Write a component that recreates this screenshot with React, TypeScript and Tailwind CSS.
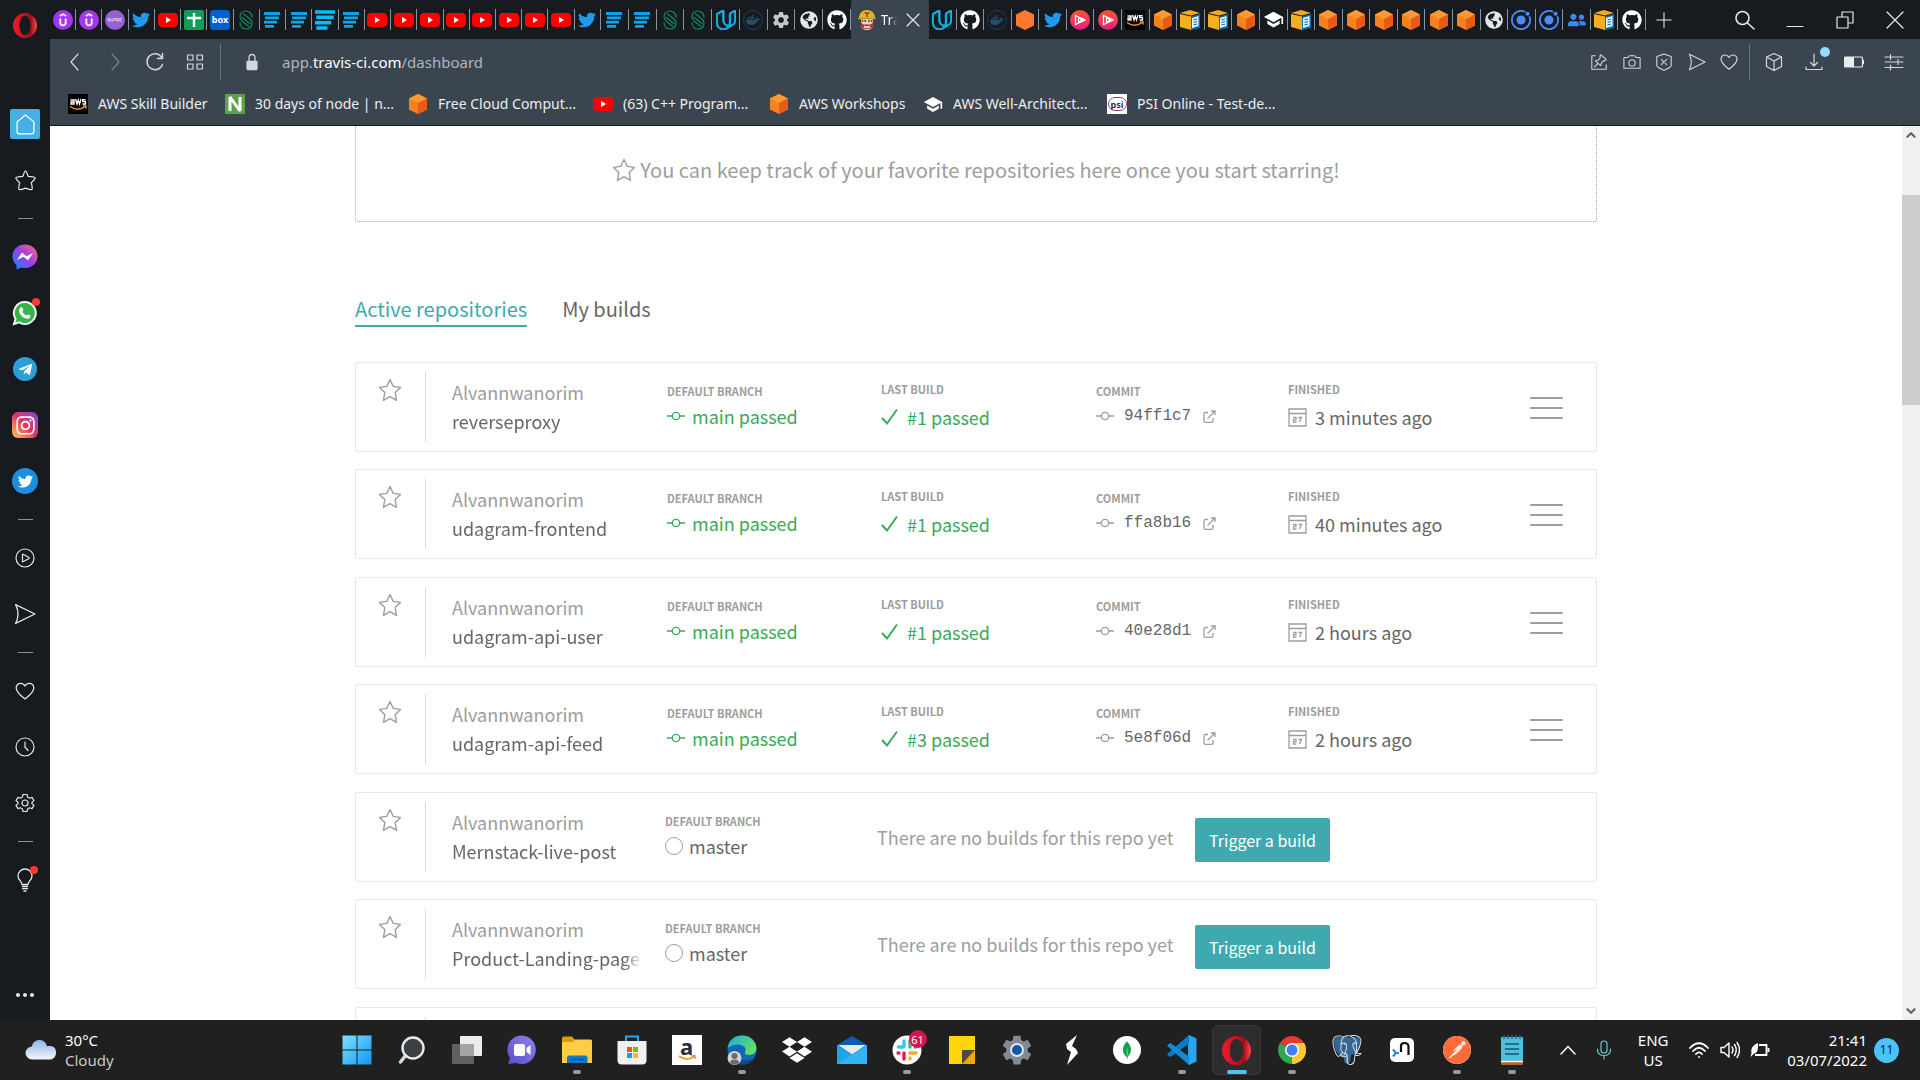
import React, { type ReactNode } from "react";
import {
  FaAws,
  FaDocker,
  FaDropbox,
  FaGithub,
  FaGlobeAmericas,
  FaInstagram,
  FaTelegramPlane,
  FaTwitter,
  FaUserFriends,
} from "react-icons/fa";
import { IoSettingsSharp } from "react-icons/io5";
import { MdSchool } from "react-icons/md";
import { SiIonic, SiMongodb, SiPluralsight, SiPostgresql, SiPostman, SiUdacity } from "react-icons/si";

/* ---------- shared glyphs ---------- */

function Line({ d, size = 20, w = 1.2, className = "" }: { d: string; size?: number; w?: number; className?: string }) {
  return (
    <svg width={size} height={size} viewBox="0 0 20 20" fill="none" stroke="currentColor" strokeWidth={w} className={className} aria-hidden>
      <path d={d} strokeLinejoin="round" strokeLinecap="round" />
    </svg>
  );
}

const HEART = "M10 17.2C5 13.4 2 10.6 2 7.2C2 4.700 3.900 3 6 3C7.700 3 9.200 4 10 5.500C10.800 4 12.300 3 14 3C16.100 3 18 4.700 18 7.200C18 10.600 15 13.400 10 17.200Z";
const SEND = "M1.500 1.500L19 10L1.500 18.500C4.500 12.500 4.500 7.500 1.500 1.500Z";

function Star({ size = 24 }: { size?: number }) {
  return (
    <svg width={size} height={size} viewBox="0 0 24 24" fill="none" stroke="currentColor" strokeWidth="1.400" aria-hidden>
      <path d="M12 1.500L15.200 8.400L22.500 9.400L17.200 14.600L18.500 22.300L12 18.700L5.500 22.300L6.800 14.600L1.500 9.400L8.800 8.400Z" strokeLinejoin="round" />
    </svg>
  );
}

function OperaO({ id, width, height }: { id: string; width: number; height: number }) {
  return (
    <svg width={width} height={height} viewBox="0 0 24 30" preserveAspectRatio="none" aria-hidden>
      <defs>
        <linearGradient id={id} x1="0" x2="1" y1="0" y2="0">
          <stop offset="0" stopColor="#f01a2b" />
          <stop offset="0.5" stopColor="#c8101e" />
          <stop offset="0.75" stopColor="#a20d18" />
          <stop offset="1" stopColor="#ff4b4b" />
        </linearGradient>
      </defs>
      <path fillRule="evenodd" fill={`url(#${id})`} d="M12 0C18.600 0 24 6.700 24 15S18.600 30 12 30S0 23.300 0 15S5.400 0 12 0ZM12 3.200C8.600 3.200 6.500 8.500 6.500 15S8.600 26.800 12 26.800S17.500 21.500 17.500 15S15.400 3.200 12 3.200Z" />
    </svg>
  );
}

/* ---------- favicons ---------- */

function Youtube() {
  return (
    <svg width="20" height="20" viewBox="0 0 20 20" aria-hidden>
      <rect y="3" width="20" height="14" rx="4" fill="#f00" />
      <path d="M8 7L13 10L8 13Z" fill="#fff" />
    </svg>
  );
}

function Udemy() {
  return (
    <svg width="20" height="20" viewBox="0 0 20 20" aria-hidden>
      <circle cx="10" cy="10" r="10" fill="#a435f0" />
      <path d="M6.800 6L10 4.200L13.200 6M7.300 8.500V12.500C7.300 16.200 12.700 16.200 12.700 12.500V8.500" fill="none" stroke="#fff" strokeWidth="1.800" />
    </svg>
  );
}

function PurpleBadge() {
  return (
    <svg width="20" height="20" viewBox="0 0 20 20" aria-hidden>
      <circle cx="10" cy="10" r="10" fill="#9261d3" />
      <path d="M3 8.500H5V11H3ZM6 8.500V11H8V8.500M9 11V8.500H11V11M12 8.500H14V11H12ZM17 8.500H15V11H17" fill="none" stroke="#e6d8f5" strokeWidth="0.800" />
    </svg>
  );
}

function Sheets() {
  return (
    <svg width="20" height="20" viewBox="0 0 20 20" aria-hidden>
      <rect width="20" height="20" rx="2" fill="#0f9d58" />
      <path d="M10 3V17M3 8H17" stroke="#fff" strokeWidth="2.400" />
    </svg>
  );
}

function Box() {
  return (
    <span className="flex size-5 items-center justify-center rounded-sm bg-[#0061d5] text-[9px] font-bold leading-none text-white">box</span>
  );
}

function GreenS() {
  return (
    <svg width="16" height="20" viewBox="0 0 16 20" fill="none" stroke="#0d8f63" strokeWidth="1.200" aria-hidden>
      <path d="M14 7.500C14 3.500 11.500 1 8 1S2 3 2 7C2 9 3 10 4 11L11 16.500" />
      <path d="M2 12.500C2 16.500 4.500 19 8 19S14 17 14 13C14 11 13 10 12 9L5 3.500" />
      <path d="M3.500 7L12.500 14" />
    </svg>
  );
}

function Lines({ big = false }: { big?: boolean }) {
  return (
    <svg width={big ? 20 : 16} height={big ? 20 : 16} viewBox="0 0 16 16" preserveAspectRatio="none" stroke={big ? "#00bfff" : "#0ba5e9"} strokeWidth="2.800" aria-hidden>
      <path d="M0 1.500H16M1 5.800H15M0 10.100H13M1 14.400H10" />
    </svg>
  );
}

function Cube({ flat = false }: { flat?: boolean }) {
  return (
    <svg width="20" height="20" viewBox="0 0 20 20" aria-hidden>
      <path d="M10 0L19 4.500V15.500L10 20L1 15.500V4.500Z" fill={flat ? "#ff7a2e" : "#f58220"} />
      {!flat && (
        <>
          <path d="M10 0L19 4.500L10 9L1 4.500Z" fill="#ff9a33" />
          <path d="M10 9L19 4.500V15.500L10 20Z" fill="#e65c17" />
        </>
      )}
    </svg>
  );
}

function YellowBox() {
  return (
    <svg width="20" height="20" viewBox="0 0 20 20" aria-hidden>
      <path d="M0 4L11 6.500V20L0 17Z" fill="#f2b01e" />
      <path d="M0 3L10 0L20 3L11 5.500Z" fill="#f5a623" />
      <path d="M11 6.500L20 4V18L11 20Z" fill="#0a6fb0" />
      <path d="M12 8L18.500 6V16L12 18Z" fill="#e9f5fb" />
      <path d="M13.500 10L17 9M13.500 12.500L17 11.500M13.500 15L17 14" stroke="#0a6fb0" strokeWidth="1.200" />
    </svg>
  );
}

function Whale() {
  return (
    <span className="flex size-5 items-center justify-center rounded-full border border-[#1f3f55] text-[#23506d]">
      <FaDocker size={14} />
    </span>
  );
}

function Plural() {
  return (
    <span className="flex size-5 items-center justify-center rounded-full bg-linear-to-b from-[#f7542e] to-[#e8127c] text-white">
      <svg width="12" height="12" viewBox="0 0 12 12" fill="none" stroke="currentColor" strokeWidth="1.200" aria-hidden>
        <path d="M1.500 1.500L11 6L1.500 10.500ZM4.500 3.500V8.500L8 6Z" />
      </svg>
    </span>
  );
}

function AwsTile() {
  return (
    <span className="flex size-5 items-center justify-center bg-black">
      <svg width="18" height="14" viewBox="0 0 18 14" fill="none" aria-hidden>
        <path d="M1.500 3H5V7H2V5H5M6.500 2L8 7L9.200 3L10.500 7L12 2M16.500 2.700H13.700V4.500H16.500V7H13.500" stroke="#fff" strokeWidth="1.300" />
        <path d="M1 9.500Q8 14.500 15.500 10.200M14 9H17V11.500" stroke="#f7981d" strokeWidth="1.500" />
      </svg>
    </span>
  );
}

function Travis() {
  return (
    <svg width="18" height="20" viewBox="0 0 18 20" className="shrink-0" aria-hidden>
      <path d="M3 8H15V15C15 18 12 20 9 20S3 18 3 15Z" fill="#e8d2b4" />
      <path d="M1 8C1 3 4.500 0 9 0S17 3 17 8Z" fill="#d9b92c" />
      <path d="M0 8.500H18" stroke="#b7971f" strokeWidth="1.500" />
      <path d="M6.500 3H11.500M9 3V7" stroke="#b5322f" strokeWidth="1.500" />
      <path d="M3 12.500C5 15 8 15 9 14C10 15 13 15 15 12.500V16C14 20 4 20 3 16Z" fill="#c62f35" />
      <path d="M6 17H12" stroke="#fff" strokeWidth="1.500" />
      <path d="M3.500 11H8M10 11H14.500" stroke="#6b5a4c" strokeWidth="2" />
      <path d="M5 11H6.500M11.500 11H13" stroke="#fff" strokeWidth="1" />
    </svg>
  );
}

const tw = () => <FaTwitter size={18} className="text-[#1d9bf0]" />;
const gh = () => <FaGithub size={20} className="text-white" />;
const yt = () => <Youtube />;
const cube = () => <Cube />;
const cap = () => <MdSchool size={21} className="text-white" />;
const globe = () => <FaGlobeAmericas size={18} className="text-[#e3e6e8]" />;
const ionic = () => <SiIonic size={20} className="text-[#4a8bfd]" />;
const udacity = () => <SiUdacity size={20} className="text-[#12b5ea]" stroke="currentColor" strokeWidth={1.2} />;

const tabsLeft = [
  () => <Udemy />, () => <Udemy />, () => <PurpleBadge />, tw, yt, () => <Sheets />, () => <Box />, () => <GreenS />,
  () => <Lines />, () => <Lines />, () => <Lines big />, () => <Lines />, yt, yt, yt, yt, yt, yt, yt, yt, tw,
];
const tabsMiddle = [
  () => <Lines />, () => <Lines />, () => <GreenS />, () => <GreenS />, udacity, () => <Whale />,
  () => <IoSettingsSharp size={18} className="text-[#c3c7ca]" />, globe, gh,
];
const tabsRight = [
  udacity, gh, () => <Whale />, () => <Cube flat />, tw, () => <Plural />, () => <Plural />, () => <AwsTile />, cube,
  () => <YellowBox />, () => <YellowBox />, cube, cap, () => <YellowBox />,
  cube, cube, cube, cube, cube, cube, globe, ionic, ionic,
  () => <FaUserFriends size={18} className="text-[#3f86f5]" />, () => <YellowBox />, gh,
];

function TabGroup({ tabs, label, className }: { tabs: (() => ReactNode)[]; label: string; className: string }) {
  return (
    <div className={`flex min-w-0 items-center ${className}`}>
      {tabs.map((icon, i) => (
        <button key={i} aria-label={`${label} ${i + 1}`} className="flex h-[21px] min-w-0 flex-1 items-center justify-center border-r border-[#8795a1]">
          {icon()}
        </button>
      ))}
    </div>
  );
}

function TabStrip() {
  return (
    <div className="flex h-[39px] bg-[#171b1f] text-[#e6e9eb]">
      <div className="flex min-w-0 flex-1">
        <TabGroup tabs={tabsLeft} label="Pinned tab" className="flex-[551]" />
        <TabGroup tabs={tabsMiddle} label="Background tab" className="flex-[250]" />
        <div className="flex min-w-0 flex-[78] items-center justify-center gap-[5px] rounded-t-xs bg-[#3b4550]">
          <Travis />
          <span className="w-[17px] overflow-hidden bg-linear-to-r from-white from-50% to-[#3b4550] bg-clip-text text-[14px] text-transparent">Tra</span>
          <button aria-label="Close tab">
            <Line d="M4 4L16 16M16 4L4 16" />
          </button>
        </div>
        <TabGroup tabs={tabsRight} label="Open tab" className="flex-[717]" />
      </div>
      <button aria-label="New tab" className="flex w-[35px] items-center justify-center">
        <Line d="M2 10H18M10 2V18" size={18} />
      </button>
      <div className="flex w-[239px] items-center justify-end">
        <button aria-label="Search tabs" className="flex w-[50px] justify-center">
          <Line d="M14 8A6.500 6.500 0 1 1 1 8A6.500 6.500 0 1 1 14 8M12.500 13L19 19" w={1.6} />
        </button>
        <button aria-label="Minimise" className="flex w-[50px] justify-center">
          <Line d="M2 16.500H18" />
        </button>
        <button aria-label="Restore" className="flex w-[50px] justify-center">
          <Line d="M2 7H13V18H2ZM7 7V2H18V13H13" />
        </button>
        <button aria-label="Close window" className="flex w-[50px] justify-center">
          <Line d="M2 2L18 18M18 2L2 18" />
        </button>
      </div>
    </div>
  );
}

/* ---------- address bar and bookmarks ---------- */

function IconButton({ label, className, children }: { label: string; className: string; children: ReactNode }) {
  return (
    <button aria-label={label} className={`flex shrink-0 items-center justify-center ${className}`}>
      {children}
    </button>
  );
}

function AddressBar() {
  return (
    <div className="flex h-[46px] items-center pl-[5px] text-[#d3d7db]">
      <IconButton label="Back" className="w-10"><Line d="M13 2L6 10L13 18" /></IconButton>
      <IconButton label="Forward" className="w-10 text-[#76818c]"><Line d="M7 2L14 10L7 18" /></IconButton>
      <IconButton label="Reload" className="w-10"><Line d="M16.500 5A8 8 0 1 0 17.500 12.500M17.500 1.500V6.500H12.500" w={1.5} /></IconButton>
      <IconButton label="Tab tiles" className="w-10"><Line d="M2.500 3H8V8H2.500ZM12 3H17.500V8H12ZM2.500 12H8V17H2.500ZM12 12H17.500V17H12Z" /></IconButton>
      <div className="ml-[5px] h-9 w-px bg-[#69737d]" />
      <div className="flex w-[61px] justify-center">
        <svg width="12" height="18" viewBox="0 0 14 20" aria-hidden>
          <path d="M3.500 9V5C3.500 0 10.500 0 10.500 5V9" fill="none" stroke="#d3d7db" strokeWidth="1.500" />
          <rect x="0.500" y="8.500" width="13" height="11" rx="1.500" fill="#d3d7db" />
        </svg>
      </div>
      <p className="flex-1 text-[15px] text-[#aeb6be]">
        app.<span className="text-white">travis-ci.com</span>/dashboard
      </p>
      <IconButton label="Pin to board" className="w-[33px]"><Line size={18} d="M6 3H2V18H18V13M12 2L18 7L16 9L15 8.500L12.500 11.500L12 14L6 9L9 8L11.500 5L11 3.500ZM9 11.500L5 15.500" /></IconButton>
      <IconButton label="Snapshot" className="w-[33px]"><Line size={18} d="M1 5H5.500L7 3H13L14.500 5H19V17H1ZM13.500 11A3.500 3.500 0 1 1 6.500 11A3.500 3.500 0 1 1 13.500 11" /></IconButton>
      <IconButton label="Tracker blocker" className="w-[32px]"><Line size={18} d="M10 1L18 4V13.500C18 16 13 17.500 10 19.500C7 17.500 2 16 2 13.500V4ZM7 7L13 13M13 7L7 13" /></IconButton>
      <IconButton label="Send" className="w-[33px]"><Line size={18} d={SEND} /></IconButton>
      <IconButton label="Add to bookmarks" className="w-[32px]"><Line d={HEART} /></IconButton>
      <div className="mx-1 h-9 w-px bg-[#69737d]" />
      <IconButton label="Extensions" className="w-10"><Line d="M10 1.500L17.500 5V14.500L10 18.500L2.500 14.500V5ZM2.500 5L10 9L17.500 5M10 9V18.500" /></IconButton>
      <div className="relative">
        <IconButton label="Downloads" className="w-10"><Line d="M10 2V14M6.500 10.500L10 14L13.500 10.500M2 15V17.500H18V15" /></IconButton>
        <span className="absolute -top-[5px] right-[4px] size-[10px] rounded-full bg-[#93dcff]" />
      </div>
      <IconButton label="Battery saver" className="w-10">
        <svg width="20" height="12" viewBox="0 0 20 12" aria-hidden>
          <rect x="0.500" y="1" width="18" height="10" rx="1" fill="none" stroke="#e8ebed" strokeWidth="1.200" />
          <rect x="0.500" y="1" width="9.500" height="10" fill="#e8ebed" />
          <path d="M19.500 4V8" stroke="#e8ebed" />
        </svg>
      </IconButton>
      <IconButton label="Easy setup" className="mr-[6px] w-10"><Line d="M1 5H19M1 10H19M1 15.500H19M6.500 2.500V7.500M14 7.500V12.500M6.500 13V18" /></IconButton>
    </div>
  );
}

const bookmarks: { label: string; width: string; icon: ReactNode }[] = [
  { label: "AWS Skill Builder", width: "w-[157px]", icon: <AwsTile /> },
  {
    label: "30 days of node | n...",
    width: "w-[183px]",
    icon: (
      <svg width="20" height="20" viewBox="0 0 20 20" aria-hidden>
        <rect width="20" height="20" fill="#5fa04e" />
        <path d="M5 17V3L15 17V3" fill="none" stroke="#fff" strokeWidth="3" strokeLinejoin="bevel" />
      </svg>
    ),
  },
  { label: "Free Cloud Comput...", width: "w-[185px]", icon: <Cube /> },
  { label: "(63) C++ Program...", width: "w-[176px]", icon: <Youtube /> },
  { label: "AWS Workshops", width: "w-[154px]", icon: <Cube /> },
  { label: "AWS Well-Architect...", width: "w-[184px]", icon: cap() },
  {
    label: "PSI Online - Test-de...",
    width: "w-[184px]",
    icon: (
      <span className="flex size-5 items-center justify-center bg-white">
        <span className="flex h-[14px] w-[19px] items-center justify-center rounded-full border border-[#9b4a6b] text-[9px] font-bold leading-none text-[#1c3766]">psi</span>
      </span>
    ),
  },
];

function Bookmarks() {
  return (
    <nav className="flex h-10 items-center pb-[2px] pl-[18px] text-[14px] leading-5 text-[#eceef0]">
      {bookmarks.map((b) => (
        <a key={b.label} href="#" className={`flex shrink-0 items-center gap-[10px] whitespace-nowrap ${b.width}`}>
          <span className="flex w-5 shrink-0 justify-center">{b.icon}</span>
          {b.label}
        </a>
      ))}
    </nav>
  );
}

/* ---------- browser sidebar ---------- */

function SideItem({ label, dot = false, children }: { label: string; dot?: boolean; children: ReactNode }) {
  return (
    <button aria-label={label} className="flex h-14 w-full items-center justify-center">
      <span className="relative flex">
        {children}
        {dot && <span className="absolute -right-[2px] -top-[2px] size-2 rounded-full bg-[#ff3a2f]" />}
      </span>
    </button>
  );
}

function Dash() {
  return (
    <div className="flex h-[21px] items-center justify-center">
      <span className="h-px w-[15px] bg-[#8493a0]" />
    </div>
  );
}

function Sidebar() {
  return (
    <aside className="flex w-[50px] shrink-0 flex-col bg-[#171b1f] text-[#e1e5e8]">
      <button aria-label="Opera menu" className="mb-[46px] flex h-[50px] items-center justify-center">
        <OperaO id="opera-menu" width={24} height={25} />
      </button>
      <SideItem label="Start page">
        <span className="flex size-[30px] items-center justify-center rounded-xs bg-[#46b0e6] text-white">
          <Line d="M10 1L18 7.500V17Q18 19 16 19H4Q2 19 2 17V7.500Z" size={21} />
        </span>
      </SideItem>
      <SideItem label="Speed dials">
        <Line d="M10 1Q11 1 12.500 6Q19 6.300 19.200 7.500Q19.200 8.500 15.500 12Q17 17.800 16 18.600Q15 19.200 10 17.200Q5 19.200 4 18.600Q3 17.800 4.500 12Q0.800 8.500 0.800 7.500Q1 6.300 7.500 6Q9 1 10 1Z" size={21} />
      </SideItem>
      <Dash />
      <SideItem label="Messenger">
        <svg width="26" height="26" viewBox="0 0 26 26" aria-hidden>
          <defs>
            <linearGradient id="msgr" x1="0" y1="1" x2="1" y2="0">
              <stop offset="0" stopColor="#0a8cff" />
              <stop offset="0.5" stopColor="#9a3df2" />
              <stop offset="1" stopColor="#ff6a63" />
            </linearGradient>
          </defs>
          <path d="M13 0.500C20 0.500 25.500 5.500 25.500 12.200S20 24 13 24Q11 24 9.200 23.400L4.500 25.500V21Q0.500 17.500 0.500 12.200C0.500 5.500 6 0.500 13 0.500Z" fill="url(#msgr)" />
          <path d="M5 16L10 8.500L14.500 12.300L21 9L16 16.500L11.500 12.800Z" fill="#fff" />
        </svg>
      </SideItem>
      <SideItem label="WhatsApp" dot>
        <svg width="26" height="26" viewBox="0 0 26 26" aria-hidden>
          <path d="M13 1A12 12 0 1 1 7 23.500L0.500 25.500L2.500 19A12 12 0 0 1 13 1Z" fill="#f2f4f2" />
          <path d="M13 3A10 10 0 1 1 7.200 21.300L3.400 22.500L4.600 18.700A10 10 0 0 1 13 3Z" fill="#35b44a" />
          <path d="M8.500 7.500Q10 6.500 10.800 8.500L11.400 10.200L10.400 11.800Q11.800 14.400 14.300 15.600L15.900 14.400L18.400 15.600Q18.800 18.500 15.500 18.800Q9 18 7 11.500Q7 8.500 8.500 7.500Z" fill="#fff" />
        </svg>
      </SideItem>
      <SideItem label="Telegram">
        <span className="flex size-6 items-center justify-center rounded-full bg-[#2d9fd8] text-white">
          <FaTelegramPlane size={15} />
        </span>
      </SideItem>
      <SideItem label="Instagram">
        <span className="flex size-[26px] items-center justify-center rounded-md bg-linear-to-tr from-[#fbc24a] via-[#e0325f] to-[#7a3ad0] text-white">
          <FaInstagram size={21} />
        </span>
      </SideItem>
      <SideItem label="Twitter">
        <span className="flex size-[26px] items-center justify-center rounded-full bg-[#1d8fe0] text-white">
          <FaTwitter size={15} />
        </span>
      </SideItem>
      <Dash />
      <SideItem label="Player">
        <Line d="M19 10A9 9 0 1 1 1 10A9 9 0 1 1 19 10M7.500 6.500Q7.500 6 8 6.200L14 9.500Q14.500 10 14 10.500L8 13.800Q7.500 14 7.500 13.500Z" />
      </SideItem>
      <SideItem label="My Flow"><Line d={SEND} size={22} /></SideItem>
      <Dash />
      <SideItem label="Bookmarks"><Line d={HEART} size={22} /></SideItem>
      <SideItem label="History"><Line d="M19 10A9 9 0 1 1 1 10A9 9 0 1 1 19 10M10 5V10L13 13.500" /></SideItem>
      <SideItem label="Settings">
        <Line d="M8 1.500H12L12.600 4L14.600 5.200L17 4.400L19 7.600L17 9.200V10.800L19 12.400L17 15.600L14.600 14.800L12.600 16L12 18.500H8L7.400 16L5.400 14.800L3 15.600L1 12.400L3 10.800V9.200L1 7.600L3 4.400L5.400 5.200L7.400 4ZM13 10A3 3 0 1 1 7 10A3 3 0 1 1 13 10" />
      </SideItem>
      <Dash />
      <SideItem label="Tips" dot>
        <svg width="22" height="24" viewBox="0 0 22 24" fill="none" stroke="currentColor" strokeWidth="1.300" aria-hidden>
          <path d="M8 16.500C8 13.500 4 12 4 8A7 7 0 0 1 18 8C18 12 14 13.500 14 16.500ZM8 18.500H14M8 20.700H14M9.500 23H12.500" />
        </svg>
      </SideItem>
      <button aria-label="Sidebar setup" className="mb-[13px] mt-auto flex h-6 items-center justify-center gap-[3px]">
        <span className="size-1 rounded-full bg-[#e1e5e8]" />
        <span className="size-1 rounded-full bg-[#e1e5e8]" />
        <span className="size-1 rounded-full bg-[#e1e5e8]" />
      </button>
    </aside>
  );
}

/* ---------- dashboard ---------- */

type Repo = { name: string; build?: string; commit?: string; finished?: string };

const repos: Repo[] = [
  { name: "reverseproxy", build: "#1 passed", commit: "94ff1c7", finished: "3 minutes ago" },
  { name: "udagram-frontend", build: "#1 passed", commit: "ffa8b16", finished: "40 minutes ago" },
  { name: "udagram-api-user", build: "#1 passed", commit: "40e28d1", finished: "2 hours ago" },
  { name: "udagram-api-feed", build: "#3 passed", commit: "5e8f06d", finished: "2 hours ago" },
  { name: "Mernstack-live-post" },
  { name: "Product-Landing-page" },
];

function CommitIcon() {
  return (
    <svg width="18" height="12" viewBox="0 0 18 12" fill="none" stroke="currentColor" strokeWidth="1.300" className="shrink-0" aria-hidden>
      <circle cx="9" cy="6" r="3.700" />
      <path d="M0 6H5.300M12.700 6H18" />
    </svg>
  );
}

function Field({ label, high = false, children }: { label: string; high?: boolean; children: ReactNode }) {
  return (
    <div className={`flex min-w-0 flex-col whitespace-nowrap ${high ? "gap-[3px] pt-[16px]" : "pt-[18px]"}`}>
      <h3 className="text-[11px] font-semibold leading-5 text-[#9d9d9d]">{label}</h3>
      <div className="flex h-[30px] items-center text-[18px]">{children}</div>
    </div>
  );
}

function Owner({ name }: { name: string }) {
  return (
    <>
      <div className="flex justify-center pr-[2px] pt-[15px] text-[#9d9d9d]">
        <button aria-label={`Star ${name}`} className="flex h-6"><Star /></button>
      </div>
      <div className="my-[9px] min-w-0 border-l border-[#d9d9d9] pl-[26px] pt-[6px] text-[18px] leading-[29px]">
        <p className="text-[#9d9d9d]">Alvannwanorim</p>
        <a href="#" className="block w-[191px] whitespace-nowrap text-[#666] mask-r-from-90%">{name}</a>
      </div>
    </>
  );
}

const frame = "mb-[17px] grid h-[90px] rounded-xs border border-[#e8e8e8] even:mb-[18px]";

function RepoCard({ repo }: { repo: Repo }) {
  if (!repo.build) {
    return (
      <li className={`${frame} grid-cols-[69px_240fr_212fr_318fr_401fr]`}>
        <Owner name={repo.name} />
        <Field label="DEFAULT BRANCH">
          <span className="mr-[6px] size-[18px] rounded-full border border-[#9d9d9d]" />
          <span className="text-[#666]">master</span>
        </Field>
        <p className="min-w-0 self-center whitespace-nowrap text-[18px] leading-[30px] text-[#9d9d9d]">There are no builds for this repo yet</p>
        <div className="min-w-0 pt-[25px]">
          <button className="h-11 w-[135px] rounded-xs bg-[#3eaaaf] text-[16px] text-white">Trigger a build</button>
        </div>
      </li>
    );
  }
  return (
    <li className={`${frame} grid-cols-[69px_242fr_214fr_215fr_192fr_242fr_66px]`}>
      <Owner name={repo.name} />
      <Field label="DEFAULT BRANCH">
        <span className="flex items-center gap-[7px] text-[#39aa56]">
          <CommitIcon />
          main passed
        </span>
      </Field>
      <Field label="LAST BUILD" high>
        <span className="flex items-center gap-[9px] text-[#39aa56]">
          <svg width="17" height="18" viewBox="0 0 17 18" fill="none" stroke="currentColor" strokeWidth="2" aria-hidden>
            <path d="M1 10L6 15.500L16 1.500" />
          </svg>
          {repo.build}
        </span>
      </Field>
      <Field label="COMMIT">
        <span className="flex items-center text-[#9d9d9d]">
          <CommitIcon />
          <a href="#" className="ml-[10px] font-['Liberation_Mono',monospace] text-[16px] text-[#666]">{repo.commit}</a>
          <svg width="13" height="13" viewBox="0 0 13 13" fill="none" stroke="currentColor" strokeWidth="1.300" className="ml-[12px]" aria-hidden>
            <path d="M5 2.500H2.500Q1 2.500 1 4V11Q1 12.300 2.500 12.300H8.500Q10 12.300 10 11V8M4.500 8.500L12 1M8 1H12V5" />
          </svg>
        </span>
      </Field>
      <Field label="FINISHED" high>
        <svg width="19" height="19" viewBox="0 0 19 19" fill="none" stroke="#9d9d9d" strokeWidth="1.300" className="mr-[8px]" aria-hidden>
          <path d="M1 1H18V18H1ZM1 5.500H18" />
          <path d="M5 9.500H8V11.700H5.500V14H8.500M10.500 9.500H13.500L11.500 14" />
        </svg>
        <span className="text-[#666]">{repo.finished}</span>
      </Field>
      <div className="pt-[34px]">
        <button aria-label={`Menu for ${repo.name}`} className="flex h-[22px] w-[33px] flex-col justify-between">
          <span className="h-[2px] w-full rounded-full bg-[#9d9d9d]" />
          <span className="h-[2px] w-full rounded-full bg-[#9d9d9d]" />
          <span className="h-[2px] w-full rounded-full bg-[#9d9d9d]" />
        </button>
      </div>
    </li>
  );
}

function Dashboard() {
  return (
    <main className="min-w-0 flex-1 overflow-hidden bg-white font-['Noto_Sans_CJK_SC',sans-serif]">
      <div className="mx-auto max-w-[1242px]">
        <section className="flex h-24 items-center justify-center gap-[4px] rounded-b-xs border border-t-0 border-dotted border-[#a9a9a9] pb-[8px] text-[20px] text-[#9d9d9d]">
          <Star />
          You can keep track of your favorite repositories here once you start starring!
        </section>
        <nav className="mb-[35px] mt-[70px] flex gap-[35px] text-[20px] leading-[33px]">
          <a href="#" aria-current="page" className="border-b-2 border-[#3eaaaf] text-[#3eaaaf]">Active repositories</a>
          <a href="#" className="text-[#666]">My builds</a>
        </nav>
        <ul>
          {repos.map((r) => <RepoCard key={r.name} repo={r} />)}
          <li className={`${frame} grid-cols-[69px_1fr]`} aria-hidden>
            <div className="col-start-2 my-[9px] border-l border-[#d9d9d9]" />
          </li>
        </ul>
      </div>
    </main>
  );
}

function Scrollbar() {
  return (
    <div className="flex w-[18px] shrink-0 flex-col items-center bg-[#f0f0f0] text-[#606060]" aria-hidden>
      <div className="flex h-[18px] items-center"><Line d="M4 13L10 7L16 13" size={12} w={3.5} /></div>
      <div className="flex w-full flex-1 flex-col">
        <div className="flex-[51]" />
        <div className="flex-[210] bg-[#cdcdcd]" />
        <div className="flex-[597]" />
      </div>
      <div className="flex h-[18px] items-center"><Line d="M4 7L10 13L16 7" size={12} w={3.5} /></div>
    </div>
  );
}

/* ---------- taskbar ---------- */

const svg30 = { width: 30, height: 30, viewBox: "0 0 30 30", "aria-hidden": true } as const;

const apps: { label: string; running?: boolean; active?: boolean; icon: ReactNode }[] = [
  {
    label: "Start",
    icon: (
      <svg {...svg30}>
        <defs><linearGradient id="win" x1="0" y1="0" x2="1" y2="1"><stop stopColor="#7be3ff" /><stop offset="1" stopColor="#1297f5" /></linearGradient></defs>
        <path d="M0.500 0.500H14.500V14.500H0.500ZM15.500 0.500H29.500V14.500H15.500ZM0.500 15.500H14.500V29.500H0.500ZM15.500 15.500H29.500V29.500H15.500Z" fill="url(#win)" />
      </svg>
    ),
  },
  {
    label: "Search",
    icon: (
      <svg {...svg30}>
        <path d="M9 20L3.500 27" stroke="#d5dadd" strokeWidth="3.500" strokeLinecap="round" />
        <circle cx="16" cy="13" r="10.500" fill="#3c4043" stroke="#e8ebed" strokeWidth="2.400" />
      </svg>
    ),
  },
  {
    label: "Task view",
    icon: (
      <svg {...svg30}>
        <rect x="8" y="1" width="22" height="20" rx="1" fill="#ececec" />
        <rect x="0" y="9" width="22" height="20" rx="1" fill="#6c6c6c" fillOpacity="0.850" />
        <rect x="8" y="9" width="14" height="12" fill="#a5a5a5" />
      </svg>
    ),
  },
  {
    label: "Chat",
    icon: (
      <svg {...svg30}>
        <defs><linearGradient id="chat" x1="0" y1="1" x2="1" y2="0"><stop stopColor="#5a4fd0" /><stop offset="1" stopColor="#8b83e8" /></linearGradient></defs>
        <path d="M15 0.500A14.300 14.300 0 1 1 9 28L1 29L3 23A14.300 14.300 0 0 1 15 0.500Z" fill="url(#chat)" />
        <rect x="7" y="9" width="11" height="12" rx="2" fill="#fff" />
        <path d="M19.500 13L23.500 10V20L19.500 17Z" fill="#fff" />
      </svg>
    ),
  },
  {
    label: "File Explorer",
    running: true,
    icon: (
      <svg {...svg30}>
        <path d="M0 3Q0 1.500 1.500 1.500H10L13 5H28V12H0Z" fill="#dc9a10" />
        <path d="M0 7H11L13 4.500H28.500Q30 4.500 30 6V28H0Z" fill="#ffcd42" />
        <path d="M5 28V23Q5 20.500 7.500 20.500H23Q25.500 20.500 25.500 23V28Z" fill="#1278cc" />
        <path d="M9 24.500H22" stroke="#0b4f94" strokeWidth="1.500" />
      </svg>
    ),
  },
  {
    label: "Microsoft Store",
    icon: (
      <svg {...svg30}>
        <path d="M9 7V1.500H21V7" fill="none" stroke="#27a8ea" strokeWidth="2" />
        <path d="M0.500 6H29.500V25Q29.500 29.500 25 29.500H5Q0.500 29.500 0.500 25Z" fill="#f1f1f1" />
        <path d="M10 12H15V17H10Z" fill="#f25022" />
        <path d="M16 12H21V17H16Z" fill="#7fba00" />
        <path d="M10 18H15V23H10Z" fill="#00a4ef" />
        <path d="M16 18H21V23H16Z" fill="#ffb900" />
      </svg>
    ),
  },
  {
    label: "Amazon",
    icon: (
      <span className="relative flex size-[30px] justify-center bg-white text-[22px] font-bold leading-[22px] text-[#222f3e]">
        a
        <svg width="18" height="6" viewBox="0 0 18 6" className="absolute bottom-[4px]" aria-hidden>
          <path d="M1 1Q9 7 16 1.500M13 0.800H17V4" fill="none" stroke="#f7981d" strokeWidth="1.600" />
        </svg>
      </span>
    ),
  },
  {
    label: "Edge",
    running: true,
    icon: (
      <svg {...svg30}>
        <defs><linearGradient id="edge" x1="0" y1="0" x2="1" y2="0.500"><stop stopColor="#1aa7de" /><stop offset="1" stopColor="#5fe06b" /></linearGradient></defs>
        <circle cx="15" cy="15" r="14.500" fill="#1267b8" />
        <path d="M0.500 13C2 4 8 0.500 15 0.500C24 0.500 29.500 7 29.500 13C29.500 19 24 21 19 19.500C16.500 18.500 19 17 18.500 14C18 10 10 6.500 0.500 13Z" fill="url(#edge)" />
        <path d="M10 14C9 22 16 28 25 24.500C27 24 28 22.500 28 22C25 28 20 29.500 15 29.500C7 29 3 20 10 14Z" fill="#0b4a8c" />
        <circle cx="7.500" cy="23" r="7" fill="#d1d1d1" />
        <circle cx="7.500" cy="21" r="3" fill="#6c6c6c" />
        <path d="M3 28Q3 24.500 7.500 24.500T12 28Q7.500 31.500 3 28Z" fill="#6c6c6c" />
      </svg>
    ),
  },
  { label: "Dropbox", icon: <FaDropbox size={30} className="text-white" /> },
  {
    label: "Mail",
    icon: (
      <svg {...svg30}>
        <path d="M0 10L15 1L30 10V29H0Z" fill="#0d5bb0" />
        <path d="M0 10L15 20L30 10V29H0Z" fill="#1da4ee" />
        <path d="M1 10H29L15 19.500Z" fill="#e8eaec" />
        <path d="M0 29L30 29V10Z" fill="#43bff5" fillOpacity="0.600" />
      </svg>
    ),
  },
  {
    label: "Slack",
    running: true,
    icon: (
      <span className="relative flex">
        <svg {...svg30}>
          <circle cx="15" cy="15" r="14.500" fill="#fff" />
          <g strokeWidth="3.400" strokeLinecap="round">
            <path d="M12 6V11.500M6.500 12H11" stroke="#36c5f0" />
            <path d="M18 6V12M23 12H24" stroke="#2eb67d" />
            <path d="M18 18H24M18 23V24" stroke="#ecb22e" />
            <path d="M12 18V24M6 18H7" stroke="#e01e5a" />
          </g>
        </svg>
        <span className="absolute -right-[5px] -top-[5px] flex size-[18px] items-center justify-center rounded-full bg-[#d6144f] text-[11px] leading-none text-white">61</span>
      </span>
    ),
  },
  {
    label: "Sticky Notes",
    icon: (
      <svg {...svg30}>
        <path d="M2 1H28V15L15 29H2Z" fill="#ffd60a" />
        <path d="M15 15H28L15 29Z" fill="#4b4a45" />
        <path d="M15 29L28 15V29Z" fill="#f3a800" />
      </svg>
    ),
  },
  {
    label: "Settings",
    icon: (
      <span className="relative flex items-center justify-center text-[#828b94]">
        <IoSettingsSharp size={32} />
        <span className="absolute size-[14px] rounded-full border-2 border-[#e4e8ec] bg-[#1159a8]" />
      </span>
    ),
  },
  {
    label: "Stripe tools",
    icon: <svg {...svg30}><path d="M20 0L9 9L10 14L14 17L10 30L21 18L19 14L15 11Z" fill="#fff" /></svg>,
  },
  {
    label: "MongoDB Compass",
    icon: (
      <span className="flex size-7 items-center justify-center rounded-full bg-white text-[#13a152]"><SiMongodb size={18} /></span>
    ),
  },
  {
    label: "Visual Studio Code",
    running: true,
    icon: (
      <svg {...svg30}>
        <path d="M22 0L29.500 3.500V26.500L22 30L21 22V8Z" fill="#2ba3ee" />
        <path d="M22 0V8.500L3.500 22L0.500 20.200V18.800Z" fill="#0a7bc9" />
        <path d="M22 30V21.500L3.500 8L0.500 9.800V11.200Z" fill="#1288d6" />
      </svg>
    ),
  },
  { label: "Opera", active: true, icon: <OperaO id="opera-task" width={29} height={29} /> },
  {
    label: "Chrome",
    running: true,
    icon: (
      <svg {...svg30}>
        <path d="M15 15L2.900 8A14 14 0 0 1 27.100 8Z" fill="#e33b2e" />
        <path d="M15 15L27.100 8A14 14 0 0 1 15 29Z" fill="#fcc934" />
        <path d="M15 15L15 29A14 14 0 0 1 2.900 8Z" fill="#2da94f" />
        <path d="M15 8H27.100A14 14 0 0 1 15 29L21 18.500Z" fill="#fcc934" />
        <circle cx="15" cy="15" r="7" fill="#fff" />
        <circle cx="15" cy="15" r="5.500" fill="#3f7ff0" />
      </svg>
    ),
  },
  {
    label: "pgAdmin",
    icon: (
      <span className="relative flex text-[#dfe8ef]">
        <svg {...svg30}>
          <path d="M8 1.500C3 1.500 1 4.500 2 9C3 14 5 19 8 20.500C9.500 21 11 19.500 12 19V25C12 30 18 30 18.500 25L19.500 19.500L26 18.500L25 16.500C28 12 30 6 27 3.500C24 1 19 2 17 2.500C14 1 11 1.500 8 1.500Z" fill="#336791" />
        </svg>
        <SiPostgresql size={30} className="absolute inset-0" />
      </span>
    ),
  },
  {
    label: "Ngrok",
    icon: (
      <svg {...svg30}>
        <rect x="3" y="3" width="24" height="24" rx="5" fill="#fff" />
        <path d="M14 17V11Q14 8 17.500 8T21.500 11V20" fill="none" stroke="#111" strokeWidth="2.200" />
        <path d="M12 18H8M9 18L6 14.500M9 18L6 21.500" stroke="#1b8cff" strokeWidth="2.200" />
      </svg>
    ),
  },
  {
    label: "Postman",
    running: true,
    icon: <span className="flex size-7 rounded-full bg-white text-[#ff6c37]"><SiPostman size={28} /></span>,
  },
  {
    label: "Notepad",
    running: true,
    icon: (
      <svg {...svg30}>
        <rect x="4" y="26" width="22" height="4" rx="1" fill="#b5652a" />
        <rect x="4" y="2" width="22" height="25" fill="#4cc0dd" />
        <path d="M4 26.500H26" stroke="#f2f2f2" strokeWidth="1.500" />
        <path d="M7 0V4M11 0V4M15 0V4M19 0V4M23 0V4" stroke="#17708c" strokeWidth="1.500" />
        <path d="M8 9H22M8 14H22M8 19H22" stroke="#14566f" strokeWidth="1.700" />
      </svg>
    ),
  },
];

function Taskbar() {
  return (
    <footer className="flex h-[60px] shrink-0 items-center bg-[#202020] text-[15px] leading-[20px] text-white">
      <div className="flex min-w-0 flex-[329]">
        <button className="flex items-center gap-[8px] pl-[25px] text-left">
          <svg width="32" height="24" viewBox="0 0 32 24" aria-hidden>
            <defs><linearGradient id="cloud" x1="0" y1="0" x2="0" y2="1"><stop stopColor="#8fb4e8" /><stop offset="1" stopColor="#f3f6fb" /></linearGradient></defs>
            <path d="M7 21.500A6.500 6.500 0 0 1 7 8.500C8 0.500 20 -0.500 22 8.500C29.500 6.500 31.500 12 31 15.500C30.500 19 28 21.500 25 21.500Z" fill="url(#cloud)" />
          </svg>
          <span>
            30°C
            <br />
            <span className="text-[#c9c9c9]">Cloudy</span>
          </span>
        </button>
      </div>
      <div className="flex shrink-0">
        {apps.map((a) => (
          <button key={a.label} aria-label={a.label} className="flex w-[55px] justify-center">
            <span className={`relative flex h-[50px] w-[49px] items-center justify-center rounded-md ${a.active ? "border border-[#3a3a3a] bg-[#2d2d2d]" : ""}`}>
              {a.icon}
              {a.running && <span className="absolute bottom-[1px] h-1 w-2 rounded-full bg-[#9a9a9a]" />}
              {a.active && <span className="absolute bottom-0 h-1 w-5 rounded-full bg-[#4cc2ff]" />}
            </span>
          </button>
        ))}
      </div>
      <div className="flex min-w-0 flex-[381] items-center justify-end">
        <IconButton label="Hidden icons" className="w-[34px]"><Line d="M3 14L10 6.500L17 14" w={1.5} /></IconButton>
        <IconButton label="Microphone" className="w-[38px] text-[#6fc3dd]">
          <Line d="M7 4Q7 1 10 1T13 4V10Q13 13 10 13T7 10ZM3.500 9V10Q4 15.500 10 15.500T16.500 10V9M10 15.500V19" />
        </IconButton>
        <button className="w-[60px] text-center">ENG<br />US</button>
        <IconButton label="Network" className="w-[32px]">
          <Line d="M1 8Q10 -1.500 19 8M4 11Q10 4.500 16 11M7 14Q10 10.800 13 14M10 16.800L10 17" w={1.8} />
        </IconButton>
        <IconButton label="Volume" className="w-[30px]">
          <Line d="M1 7.500V12.500H4L9 17V3L4 7.500ZM12 7Q14 10 12 13M14.500 4.500Q18 10 14.500 15.500M17 2.500Q22 10 17 17.500" w={1.4} />
        </IconButton>
        <IconButton label="Battery" className="w-[30px]">
          <svg width="20" height="18" viewBox="0 0 20 18" aria-hidden>
            <path d="M9 4H16.500V14H5" fill="none" stroke="#fff" strokeWidth="1.800" />
            <path d="M17.500 7H19.500V11H17.500Z" fill="#fff" />
            <path d="M8 2Q0 5 1.500 12L0.500 16L3.500 13Q9 12 8 2Z" fill="#fff" />
          </svg>
        </IconButton>
        <button className="flex items-center gap-[7px] whitespace-nowrap pl-[12px] pr-[21px] text-right">
          <span>21:41<br />03/07/2022</span>
          <span className="flex size-[25px] items-center justify-center rounded-full bg-[#4cc2ff] text-[12px] text-[#10202b]">11</span>
        </button>
      </div>
    </footer>
  );
}

export default function App() {
  return (
    <div className="flex h-screen flex-col overflow-hidden bg-[#171b1f] font-['Noto_Sans',sans-serif]">
      <div className="flex min-h-0 flex-1">
        <Sidebar />
        <div className="flex min-w-0 flex-1 flex-col">
          <TabStrip />
          <header className="border-b border-[#14181c] bg-[#3b4550]">
            <AddressBar />
            <Bookmarks />
          </header>
          <div className="flex min-h-0 flex-1">
            <Dashboard />
            <Scrollbar />
          </div>
        </div>
      </div>
      <Taskbar />
    </div>
  );
}
